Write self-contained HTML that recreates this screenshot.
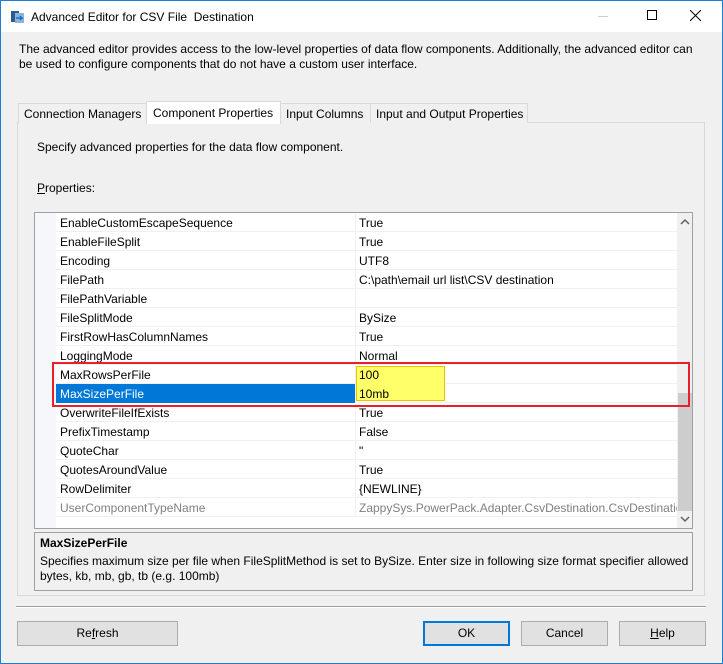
<!DOCTYPE html>
<html><head><style>
*{margin:0;padding:0;box-sizing:border-box}
body{width:723px;height:664px;overflow:hidden;font-family:"Liberation Sans",sans-serif;font-size:12px;color:#000;background:#f0f0f0;position:relative}
.abs{position:absolute}
.win{position:absolute;left:0;top:0;width:723px;height:664px;border:1px solid #1a7fd4}
.title{left:1px;top:1px;width:721px;height:31px;background:#fff}
.t{position:absolute;white-space:nowrap;line-height:14px}
.tab{position:absolute;top:103px;height:20px;border:1px solid #d9d9d9;border-bottom:none;background:#f0f0f0;padding:3px 0 0 5px;white-space:nowrap}
.panel{left:17px;top:122px;width:688px;height:474px;border:1px solid #d9d9d9;background:#f0f0f0}
.grid{left:34px;top:212px;width:659px;height:317px;border:1px solid #a0a0a0;background:#fff;overflow:hidden}
.row{position:absolute;left:21px;width:621px;height:19px;border-bottom:1px solid #f0f0f0}
.row .n{position:absolute;left:4px;top:3px;white-space:nowrap}
.row .v{position:absolute;left:303px;top:3px;white-space:nowrap}
.row .sep{position:absolute;left:299px;top:0;width:1px;height:19px;background:#f0f0f0}
.btn{position:absolute;top:621px;height:25px;border:1px solid #adadad;background:#e1e1e1;text-align:center;line-height:23px}
</style></head><body>
<div class="win"></div>
<div class="abs title"></div>
<svg class="abs" style="left:10px;top:9px" width="16" height="16"><rect x="1" y="2" width="8" height="11" fill="#2d5b8c"/><rect x="5" y="4" width="9" height="10" fill="#8ab4dc"/><path d="M6 9h6l-2-2M12 9l-2 2" stroke="#1e6fc4" stroke-width="1.5" fill="none"/></svg>
<div class="t" style="left:31px;top:10px">Advanced Editor for CSV File&nbsp; Destination</div>
<div class="abs" style="left:598px;top:16px;width:10px;height:1px;background:#ccc"></div>
<div class="abs" style="left:647px;top:10px;width:10px;height:10px;border:1px solid #000"></div>
<svg class="abs" style="left:690px;top:10px" width="11" height="11"><path d="M0 0L11 11M11 0L0 11" stroke="#000" stroke-width="1"/></svg>
<div class="t" style="left:19px;top:42px">The advanced editor provides access to the low-level properties of data flow components. Additionally, the advanced editor can</div>
<div class="t" style="left:19px;top:57px">be used to configure components that do not have a custom user interface.</div>
<div class="abs panel"></div>
<div class="tab" style="left:18px;width:129px">Connection Managers</div>
<div class="tab" style="left:146px;top:101px;height:23px;width:135px;background:#fff;border-color:#d9d9d9;z-index:2;padding-top:4px;padding-left:6px">Component Properties</div>
<div class="tab" style="left:280px;width:91px">Input Columns</div>
<div class="tab" style="left:370px;width:158px">Input and Output Properties</div>
<div class="t" style="left:37px;top:140px">Specify advanced properties for the data flow component.</div>
<div class="t" style="left:37px;top:181px"><u>P</u>roperties:</div>
<div class="abs grid">
<div class="abs" style="left:0;top:0;width:21px;height:316px;background:#f5f7fb"></div>
<div class="row" style="top:0"><div class="n">EnableCustomEscapeSequence</div><div class="sep"></div><div class="v">True</div></div>
<div class="row" style="top:19px"><div class="n">EnableFileSplit</div><div class="sep"></div><div class="v">True</div></div>
<div class="row" style="top:38px"><div class="n">Encoding</div><div class="sep"></div><div class="v">UTF8</div></div>
<div class="row" style="top:57px"><div class="n">FilePath</div><div class="sep"></div><div class="v">C:\path\email url list\CSV destination</div></div>
<div class="row" style="top:76px"><div class="n">FilePathVariable</div><div class="sep"></div><div class="v"></div></div>
<div class="row" style="top:95px"><div class="n">FileSplitMode</div><div class="sep"></div><div class="v">BySize</div></div>
<div class="row" style="top:114px"><div class="n">FirstRowHasColumnNames</div><div class="sep"></div><div class="v">True</div></div>
<div class="row" style="top:133px"><div class="n">LoggingMode</div><div class="sep"></div><div class="v">Normal</div></div>
<div class="row" style="top:152px"><div class="n">MaxRowsPerFile</div><div class="sep"></div></div>
<div class="row" style="top:171px"><div class="abs" style="left:0;top:0;width:299px;height:19px;background:#0078d7"></div><div class="n" style="color:#fff">MaxSizePerFile</div><div class="sep"></div></div>
<div class="abs" style="left:321px;top:153px;width:89px;height:35px;background:#ffff6a;border:1px solid #f0c000"></div>
<div class="t" style="left:324px;top:155px">100</div>
<div class="t" style="left:324px;top:174px">10mb</div>
<div class="row" style="top:190px"><div class="n">OverwriteFileIfExists</div><div class="sep"></div><div class="v">True</div></div>
<div class="row" style="top:209px"><div class="n">PrefixTimestamp</div><div class="sep"></div><div class="v">False</div></div>
<div class="row" style="top:228px"><div class="n">QuoteChar</div><div class="sep"></div><div class="v">"</div></div>
<div class="row" style="top:247px"><div class="n">QuotesAroundValue</div><div class="sep"></div><div class="v">True</div></div>
<div class="row" style="top:266px"><div class="n">RowDelimiter</div><div class="sep"></div><div class="v">{NEWLINE}</div></div>
<div class="row" style="top:285px;color:#808080"><div class="n">UserComponentTypeName</div><div class="sep"></div><div class="v">ZappySys.PowerPack.Adapter.CsvDestination.CsvDestination</div></div>
<div class="abs" style="left:642px;top:0;width:16px;height:316px;background:#f0f0f0"></div>
<div class="abs" style="left:643px;top:180px;width:14px;height:118px;background:#cdcdcd"></div>
<svg class="abs" style="left:645px;top:5px" width="10" height="8"><path d="M1 6L5 2L9 6" stroke="#606060" stroke-width="1.5" fill="none"/></svg>
<svg class="abs" style="left:645px;top:302px" width="10" height="8"><path d="M1 2L5 6L9 2" stroke="#606060" stroke-width="1.5" fill="none"/></svg>
</div>
<div class="abs" style="left:52px;top:362px;width:638px;height:45px;border:2px solid #e8202a"></div>
<div class="abs" style="left:34px;top:532px;width:659px;height:59px;border:1px solid #a0a0a0;background:#f0f0f0"></div>
<div class="t" style="left:40px;top:536px;font-weight:bold">MaxSizePerFile</div>
<div class="t" style="left:40px;top:554px">Specifies maximum size per file when FileSplitMethod is set to BySize. Enter size in following size format specifier allowed</div>
<div class="t" style="left:40px;top:569px">bytes, kb, mb, gb, tb (e.g. 100mb)</div>
<div class="abs" style="left:16px;top:606px;width:690px;height:2px;border-top:1px solid #a0a0a0;border-bottom:1px solid #fff"></div>
<div class="btn" style="left:17px;width:161px">Re<u>f</u>resh</div>
<div class="btn" style="left:423px;width:87px;border:2px solid #0078d7;line-height:21px">OK</div>
<div class="btn" style="left:521px;width:87px">Cancel</div>
<div class="btn" style="left:619px;width:87px"><u>H</u>elp</div>
</body></html>
